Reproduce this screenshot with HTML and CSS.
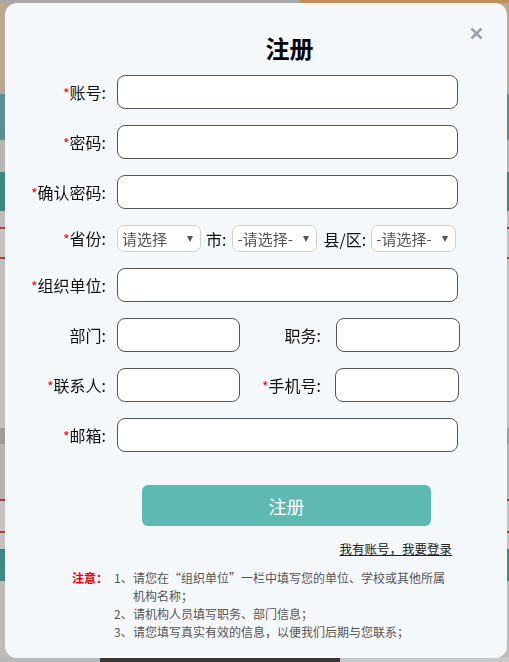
FILE: index.html
```html
<!DOCTYPE html>
<html lang="zh-CN">
<head>
<meta charset="utf-8">
<title>注册</title>
<link rel="stylesheet" href="styles.css">
</head>
<body>
<div class="page"></div>
<div class="modal">
  <button class="close" type="button" aria-label="关闭">
    <svg viewBox="0 0 13 13" width="13" height="13"><path d="M1.5 1.5 L11.5 11.5 M11.5 1.5 L1.5 11.5" /></svg>
  </button>
  <h2 class="title">注册</h2>
  <form class="form">
    <div class="row">
      <label class="lbl"><i class="req">*</i>账号:</label>
      <input class="field" type="text">
    </div>
    <div class="row">
      <label class="lbl"><i class="req">*</i>密码:</label>
      <input class="field" type="password">
    </div>
    <div class="row">
      <label class="lbl"><i class="req">*</i>确认密码:</label>
      <input class="field" type="password">
    </div>
    <div class="row">
      <label class="lbl"><i class="req">*</i>省份:</label>
      <span class="sel s1"><select><option>请选择</option></select></span>
      <span class="sub sub-city">市:</span>
      <span class="sel s2"><select><option>-请选择-</option></select></span>
      <span class="sub sub-county">县/区:</span>
      <span class="sel s2"><select><option>-请选择-</option></select></span>
    </div>
    <div class="row">
      <label class="lbl"><i class="req">*</i>组织单位:</label>
      <input class="field" type="text">
    </div>
    <div class="row">
      <label class="lbl">部门:</label>
      <input class="field half" type="text">
      <label class="lbl lbl2">职务:</label>
      <input class="field half2" type="text">
    </div>
    <div class="row">
      <label class="lbl"><i class="req">*</i>联系人:</label>
      <input class="field half" type="text">
      <label class="lbl lbl2 lbl3"><i class="req">*</i>手机号:</label>
      <input class="field half2" type="text">
    </div>
    <div class="row">
      <label class="lbl"><i class="req">*</i>邮箱:</label>
      <input class="field" type="text">
    </div>
  </form>
  <button class="btn" type="button">注册</button>
  <div class="login"><a href="#">我有账号，我要登录</a></div>
  <div class="notes">
    <div class="notes-h">注意：</div>
    <ol class="notes-list">
      <li><span class="n">1、</span><span class="t">请您在“组织单位”一栏中填写您的单位、学校或其他所属机构名称；</span></li>
      <li><span class="n">2、</span><span class="t">请机构人员填写职务、部门信息；</span></li>
      <li><span class="n">3、</span><span class="t">请您填写真实有效的信息，以便我们后期与您联系；</span></li>
    </ol>
  </div>
</div>
</body>
</html>
```
FILE: styles.css
```css
html, body {
  margin: 0;
  height: 662px;
  overflow: hidden;
}
body {
  font-family: "Microsoft YaHei", "Noto Sans CJK SC", sans-serif;
  color: #111;
}
.page {
  height: 662px;
  background:
    linear-gradient(to right, #b9b9b9 0 100px, #3b3631 100px 340px, #c8c8c8 340px) left bottom / 100% 5px no-repeat,
    linear-gradient(to right, #a9a9a9 0 300px, #c98a5a 300px 509px) left top / 100% 3px no-repeat,
    linear-gradient(to bottom,
      #b9a98f 0 90px,
      #a8a8a8 90px 94px,
      #5f8d8f 94px 140px,
      #b5b5b5 140px 172px,
      #3f877f 172px 211px,
      #bdbdbd 211px 227px,
      #b03a3a 227px 229px,
      #c4c4c4 229px 257px,
      #b03a3a 257px 259px,
      #bfbfbf 259px 428px,
      #9c9c9c 428px 444px,
      #b3b3b3 444px 499px,
      #b03a3a 499px 501px,
      #c4c4c4 501px 531px,
      #b03a3a 531px 533px,
      #c2c2c2 533px 549px,
      #3e8a80 549px 581px,
      #bcbcbc 581px);
}
.modal {
  position: fixed;
  left: 5px;
  top: 3px;
  width: 502px;
  height: 655px;
  box-sizing: border-box;
  padding-top: 30px;
  background: #f5f8fb;
  border-radius: 12px;
}
.close {
  position: absolute;
  top: 24px;
  right: 24px;
  width: 13px;
  height: 13px;
  padding: 0;
  border: 0;
  background: none;
  display: block;
}
.close svg {
  display: block;
}
.close path {
  stroke: #9aa1a9;
  stroke-width: 2.6;
  fill: none;
}
.title {
  margin: 0 0 12px 67px;
  font-size: 24px;
  line-height: 30px;
  font-weight: bold;
  text-align: center;
  color: #000;
}
.form {
  display: flex;
  flex-direction: column;
  gap: 16px;
  margin: 0;
}
.row {
  display: flex;
  align-items: center;
}
.lbl {
  width: 101px;
  flex: none;
  margin-right: 11px;
  text-align: right;
  font-size: 16px;
  line-height: 20px;
  color: #111;
  white-space: nowrap;
}
.req {
  font-style: normal;
  color: #f00;
  font-size: 14px;
}
.field {
  width: 341px;
  height: 34px;
  box-sizing: border-box;
  border: 1px solid #555;
  border-radius: 8px;
  background: #fff;
  padding: 0 8px;
  font-size: 14px;
  flex: none;
}
.half {
  width: 123px;
}
.lbl2 {
  width: 81px;
  margin-right: 15px;
}
.lbl3 {
  margin-right: 14px;
}
.half2 {
  width: 124px;
}
.sel {
  position: relative;
  display: block;
  flex: none;
  height: 27px;
}
.s1 {
  width: 84px;
}
.s2 {
  width: 85px;
}
.sel select {
  appearance: none;
  -webkit-appearance: none;
  width: 100%;
  height: 27px;
  box-sizing: border-box;
  border: 1px solid #cfcfcf;
  border-radius: 7px;
  background: #fff;
  padding: 0 0 0 4px;
  font-family: "Microsoft YaHei", "Noto Sans CJK SC", sans-serif;
  font-size: 15px;
  color: #555;
}
.sel::after {
  content: "";
  position: absolute;
  right: 8px;
  top: 11px;
  border-left: 3.5px solid transparent;
  border-right: 3.5px solid transparent;
  border-top: 6px solid #555;
  pointer-events: none;
}
.sub {
  font-size: 16px;
  line-height: 20px;
  flex: none;
  color: #111;
}
.sub-city {
  margin: 0 6px 0 5px;
}
.sub-county {
  margin: 0 5px 0 6px;
}
.btn {
  display: block;
  margin: 33px 0 0 137px;
  width: 289px;
  height: 41px;
  border: 0;
  border-radius: 6px;
  background: #5db9b2;
  color: #fff;
  font-family: "Microsoft YaHei", "Noto Sans CJK SC", sans-serif;
  font-size: 18px;
  padding: 0;
}
.login {
  margin: 14px 55px 0 0;
  text-align: right;
  font-size: 12.5px;
  line-height: 18px;
}
.login a {
  color: #222;
  text-decoration: underline;
}
.notes {
  display: flex;
  margin: 11px 61px 0 67px;
  font-size: 12px;
  line-height: 18px;
  color: #555;
}
.notes-h {
  width: 42px;
  flex: none;
  color: #e00;
  font-weight: bold;
}
.notes-list {
  list-style: none;
  margin: 0;
  padding: 0;
  flex: 1;
}
.notes-list li {
  display: flex;
}
.n {
  width: 19px;
  flex: none;
  white-space: nowrap;
}
.t {
  flex: 1;
}
```
